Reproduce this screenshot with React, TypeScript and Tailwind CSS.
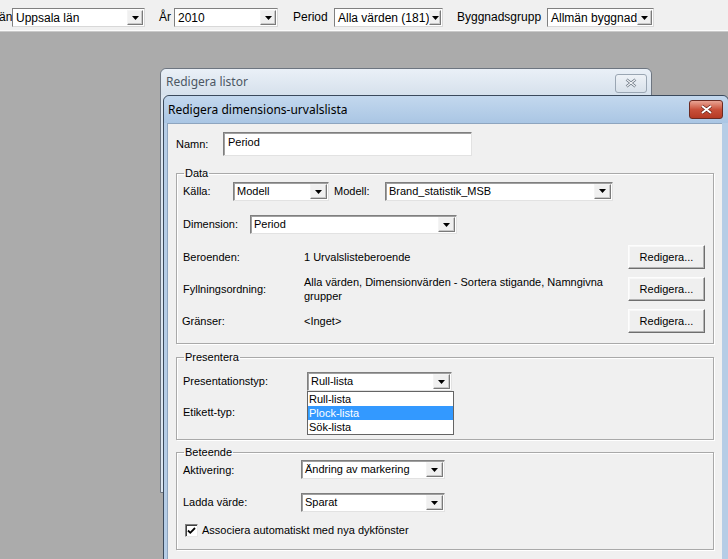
import React from "react";

function Arrow({ small = false }: { small?: boolean }) {
  return (
    <div
      className={
        "flex items-center justify-center bg-[#f0f0f0] border border-t-[#f4f4f4] border-l-[#f4f4f4] border-r-[#7a7a7a] border-b-[#7a7a7a] shadow-[inset_-1px_-1px_0_#c8c8c8] " +
        (small ? "w-[16px] h-[15px]" : "w-[17px] h-[15px]")
      }
    >
      <svg width="7" height="4" viewBox="0 0 7 4">
        <path d="M0 0H7L3.5 4Z" fill="#000" />
      </svg>
    </div>
  );
}

function Combo({
  className,
  text,
}: {
  className: string;
  text: string;
}) {
  return (
    <div
      className={
        "flex items-center justify-between bg-white border border-t-[#7f7f7f] border-l-[#7f7f7f] border-r-[#e2e2e2] border-b-[#e2e2e2] shadow-[inset_1px_1px_0_#a0a0a0] pl-[3px] pr-[1px] h-[19px] " +
        className
      }
    >
      <span className="whitespace-nowrap leading-[13px]">{text}</span>
      <Arrow />
    </div>
  );
}

function TopCombo({ className, text }: { className: string; text: string }) {
  return (
    <div
      className={
        "flex items-center justify-between bg-white border border-t-[#808080] border-l-[#808080] border-r-[#d8d8d8] border-b-[#d8d8d8] pl-[3px] pr-[1px] h-[19px] " +
        className
      }
    >
      <span className="whitespace-nowrap leading-[14px]">{text}</span>
      <Arrow small />
    </div>
  );
}

function Button() {
  return (
    <div className="w-[77px] h-[24px] flex items-center justify-center bg-[#efefef] border border-t-[#fdfdfd] border-l-[#fdfdfd] border-r-[#6e6e6e] border-b-[#6e6e6e] shadow-[inset_-1px_-1px_0_#b4b4b4,inset_1px_1px_0_#f8f8f8] shrink-0">
      Redigera...
    </div>
  );
}

function Group({
  title,
  className,
  children,
}: {
  title: string;
  className: string;
  children: React.ReactNode;
}) {
  return (
    <fieldset
      className={
        "w-[538px] border border-[#a9a9a9] shadow-[inset_1px_1px_0_#ffffff,1px_1px_0_#ffffff] " +
        className
      }
    >
      <legend className="ml-[7px] px-[1px] leading-[13px]">{title}</legend>
      {children}
    </fieldset>
  );
}

export default function App() {
  return (
    <div
      className="relative w-[728px] h-[559px] overflow-hidden bg-[#ababab] text-black"
      style={{ fontFamily: '"Liberation Sans", Arial, sans-serif' }}
    >
      {/* Toolbar */}
      <div className="h-[31px] bg-[#f0f0f0] border-b border-b-[#fbfbfb] shadow-[0_1px_0_#c9c9c9] flex items-start pt-[8px] text-[12px]">
        <span className="leading-[19px] ml-[-1px] w-[13px]">än</span>
        <TopCombo className="w-[133px]" text="Uppsala län" />
        <span className="leading-[19px] ml-[14px] w-[15px]">År</span>
        <TopCombo className="w-[104px]" text="2010" />
        <span className="leading-[19px] ml-[15px] w-[41px]">Period</span>
        <TopCombo className="w-[109px]" text="Alla värden (181)" />
        <span className="leading-[19px] ml-[14px] w-[90px]">Byggnadsgrupp</span>
        <TopCombo className="w-[107px]" text="Allmän byggnad" />
      </div>

      {/* Outer dialog (inactive) */}
      <div className="absolute left-[160px] top-[68px] w-[492px] h-[425px] rounded-t-[6px] border border-[#6d7580] bg-[#dce6f0]">
        <div className="h-[26px] flex items-center justify-between pl-[5px] pr-[4px] rounded-t-[6px] bg-gradient-to-b from-[#eaf0f7] to-[#d6e1ec]">
          <span
            className="text-[12px] text-[#4c5763]"
            style={{ fontFamily: '"Noto Sans", "Liberation Sans", sans-serif' }}
          >
            Redigera listor
          </span>
          <div className="w-[32px] h-[19px] rounded-[3px] border border-[#9aa6b3] bg-gradient-to-b from-[#eef2f7] to-[#d8e1ea] flex items-center justify-center mt-[2px]">
            <svg width="12" height="10" viewBox="0 0 12 10">
              <path
                d="M1.5 1.5L10.5 8.5M10.5 1.5L1.5 8.5"
                stroke="#5f6b78"
                strokeWidth="2.6"
              />
              <path
                d="M1.5 1.5L10.5 8.5M10.5 1.5L1.5 8.5"
                stroke="#f4f6f9"
                strokeWidth="1.2"
              />
            </svg>
          </div>
        </div>
      </div>

      {/* Inner dialog (active) */}
      <div className="absolute left-[163px] top-[95px] w-[566px] h-[470px] rounded-t-[6px] border border-[#3b4a5c] bg-[#b6cde6] flex flex-col">
        <div className="h-[27px] shrink-0 flex items-center justify-between pl-[4px] pr-[5px] rounded-t-[6px] bg-gradient-to-b from-[#c3d8ee] to-[#aac6e4]">
          <span
            className="text-[12px] text-black"
            style={{ fontFamily: '"Noto Sans", "Liberation Sans", sans-serif' }}
          >
            Redigera dimensions-urvalslista
          </span>
          <div className="w-[34px] h-[19px] rounded-[3px] border border-[#6b2a22] bg-gradient-to-b from-[#e8a494] via-[#c9503a] to-[#b53a24] flex items-center justify-center">
            <svg width="13" height="11" viewBox="0 0 13 11">
              <path
                d="M2 2L11 9M11 2L2 9"
                stroke="#5b1a12"
                strokeWidth="3.2"
              />
              <path d="M2 2L11 9M11 2L2 9" stroke="#ffffff" strokeWidth="2" />
            </svg>
          </div>
        </div>

        {/* Client area */}
        <div className="ml-[3px] w-[555px] flex-1 bg-[#f0f0f0] border-l border-t border-[#8ea5bf] text-[11px] pl-[8px] pt-[8px]">
          {/* Namn */}
          <div className="flex items-center h-[24px]">
            <span className="w-[47px]">Namn:</span>
            <div className="w-[249px] h-[24px] bg-white border border-t-[#7f7f7f] border-l-[#7f7f7f] border-r-[#e2e2e2] border-b-[#e2e2e2] shadow-[inset_1px_1px_0_#a0a0a0] pl-[4px] pt-[3px] leading-[13px]">
              Period
            </div>
          </div>

          {/* Data */}
          <Group title="Data" className="mt-[11px]">
            <div className="pl-[6px] pr-[8px] pt-[2px] pb-[10px]">
              <div className="flex items-center h-[19px]">
                <span className="w-[50px]">Källa:</span>
                <Combo className="w-[96px]" text="Modell" />
                <span className="ml-[5px] w-[51px]">Modell:</span>
                <Combo className="w-[228px] -mt-[1px]" text="Brand_statistik_MSB" />
              </div>
              <div className="flex items-center h-[19px] mt-[14px]">
                <span className="w-[67px]">Dimension:</span>
                <Combo className="w-[207px]" text="Period" />
              </div>
              <div className="flex items-center h-[24px] mt-[11px]">
                <span className="w-[121px]">Beroenden:</span>
                <span className="flex-1">1 Urvalslisteberoende</span>
                <Button />
              </div>
              <div className="flex items-center h-[24px] mt-[8px]">
                <span className="w-[121px]">Fyllningsordning:</span>
                <span className="flex-1 leading-[14px]">
                  Alla värden, Dimensionvärden - Sortera stigande, Namngivna
                  <br />
                  grupper
                </span>
                <Button />
              </div>
              <div className="flex items-center h-[24px] mt-[8px]">
                <span className="w-[121px] -ml-[1px] pl-0">Gränser:</span>
                <span className="flex-1 pl-[1px]">&lt;Inget&gt;</span>
                <Button />
              </div>
            </div>
          </Group>

          {/* Presentera */}
          <Group title="Presentera" className="mt-[7px]">
            <div className="pl-[6px] pr-[8px] pt-[8px] pb-[17px]">
              <div className="flex items-center h-[19px]">
                <span className="w-[124px]">Presentationstyp:</span>
                <div className="relative">
                  <Combo className="w-[145px]" text="Rull-lista" />
                  <div className="absolute left-0 top-[19px] w-[147px] bg-white border border-[#646464] z-10">
                    <div className="h-[14px] leading-[14px] pl-[1px]">Rull-lista</div>
                    <div className="h-[14px] leading-[14px] pl-[1px] bg-[#3399ff] text-white">
                      Plock-lista
                    </div>
                    <div className="h-[14px] leading-[14px] pl-[1px]">Sök-lista</div>
                  </div>
                </div>
              </div>
              <div className="flex items-center h-[19px] mt-[12px]">
                <span>Etikett-typ:</span>
              </div>
            </div>
          </Group>

          {/* Beteende */}
          <Group title="Beteende" className="mt-[6px]">
            <div className="pl-[6px] pr-[8px] pt-[1px] pb-[12px]">
              <div className="flex items-center h-[19px]">
                <span className="w-[118px] mt-[2px]">Aktivering:</span>
                <Combo className="w-[144px]" text="Ändring av markering" />
              </div>
              <div className="flex items-center h-[19px] mt-[14px]">
                <span className="w-[118px]">Ladda värde:</span>
                <Combo className="w-[144px]" text="Sparat" />
              </div>
              <div className="flex items-center h-[13px] mt-[12px]">
                <div className="ml-[2px] w-[13px] h-[13px] bg-white border border-t-[#808080] border-l-[#808080] border-r-[#e8e8e8] border-b-[#e8e8e8] shadow-[inset_1px_1px_0_#404040] flex items-center justify-center">
                  <svg width="9" height="8" viewBox="0 0 9 8">
                    <path
                      d="M1 3.5L3.3 5.8L8 1"
                      stroke="#000"
                      strokeWidth="1.8"
                      fill="none"
                    />
                  </svg>
                </div>
                <span className="ml-[4px]">Associera automatiskt med nya dykfönster</span>
              </div>
            </div>
          </Group>
        </div>
      </div>
    </div>
  );
}
